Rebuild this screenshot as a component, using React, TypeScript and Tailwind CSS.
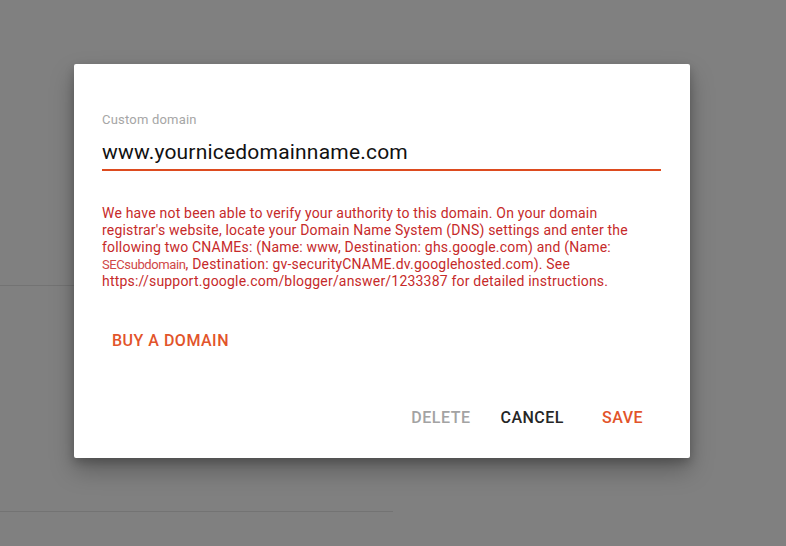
export default function App() {
  return (
    <div className="relative h-[546px] w-[786px] overflow-hidden bg-[#808080] font-['Roboto','Liberation_Sans',sans-serif]">
      {/* dimmed page underneath */}
      <div className="pt-[285px]">
        <div className="h-px w-[400px] bg-[#737373]" />
        <div className="mt-[225px] h-px w-[393px] bg-[#737373]" />
      </div>

      {/* dialog */}
      <div className="absolute left-[74px] top-[64px] flex h-[394px] w-[616px] flex-col rounded-[2px] bg-white px-7 pt-[48px] shadow-[0_12px_24px_rgba(0,0,0,0.28),0_4px_10px_rgba(0,0,0,0.2)]">
        <label className="text-[13px] leading-4 text-[#a6a6a6] tracking-[0.2px]">Custom domain</label>
        <div className="mr-[1px] mt-[10px] border-b-2 border-[#dd4b1f] pb-[3px] text-[21px] leading-7 tracking-[0.2px] text-[#111]">
          www.yournicedomainname.com
        </div>
        <p className="mt-[34px] whitespace-nowrap text-[14px] leading-[17px] tracking-[0.2px] text-[#c62a2a]">
          We have not been able to verify your authority to this domain. On your domain
          <br />
          registrar's website, locate your Domain Name System (DNS) settings and enter the
          <br />
          following two CNAMEs: (Name: www, Destination: ghs.google.com) and (Name:
          <br />
          <span className="text-[13px] tracking-[-0.4px] text-[#d04848]">SECsubdomain</span>, Destination: gv-securityCNAME.dv.googlehosted.com). See
          <br />
          https://support.google.com/blogger/answer/1233387 for detailed instructions.
        </p>
        <div className="mt-[39px]">
          <button className="px-[10px] text-[16px] font-medium leading-5 tracking-[0.5px] text-[#e2542a]">BUY A DOMAIN</button>
        </div>
        <div className="mt-auto mb-[30px] flex items-center justify-end pr-[19px] text-[16px] font-medium leading-5 tracking-[0.5px]">
          <button className="text-[#a3a3a3]">DELETE</button>
          <button className="ml-[30px] text-[#262626]">CANCEL</button>
          <button className="ml-[38px] text-[#e2542a]">SAVE</button>
        </div>
      </div>
    </div>
  );
}
